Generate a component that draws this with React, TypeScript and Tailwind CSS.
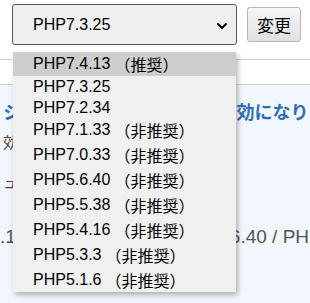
import { ChevronDown } from "lucide-react";

const versions = [
  { label: "PHP7.4.13", note: "（推奨）", h: "h-[24px]" },
  { label: "PHP7.3.25", note: "", h: "h-[21px]" },
  { label: "PHP7.2.34", note: "", h: "h-[21px]" },
  { label: "PHP7.1.33", note: "（非推奨）", h: "h-[24px]" },
  { label: "PHP7.0.33", note: "（非推奨）", h: "h-[25px]" },
  { label: "PHP5.6.40", note: "（非推奨）", h: "h-[25px]" },
  { label: "PHP5.5.38", note: "（非推奨）", h: "h-[25px]" },
  { label: "PHP5.4.16", note: "（非推奨）", h: "h-[25px]" },
  { label: "PHP5.3.3", note: "（非推奨）", h: "h-[25px]" },
  { label: "PHP5.1.6", note: "（非推奨）", h: "h-[25px]" },
];

export default function App() {
  return (
    <div className="relative w-[310px] h-[303px] overflow-hidden bg-white font-['Liberation_Sans','Noto_Sans_CJK_JP',sans-serif] text-black">
      {/* form row */}
      <div className="flex items-center h-[60px] pl-[12px] pb-[10px] border-b border-[#cfcfcf]">
        <div className="flex items-center justify-between w-[225px] h-[41px] pl-[20px] pr-[6px] bg-[#efefef] border border-[#555] rounded-[3px] text-[16px]">
          <span>PHP7.3.25</span>
          <ChevronDown className="w-[16px] h-[16px] mt-[2px]" strokeWidth={3} />
        </div>
        <button className="ml-[10px] w-[54px] h-[35px] rounded-[3px] border border-[#b5b5b5] bg-gradient-to-b from-[#f6f6f6] to-[#e1e1e1] text-[17px] font-['Noto_Sans_CJK_JP',sans-serif] leading-none">
          変更
        </button>
      </div>

      <div className="h-[25px] border-b border-[#cfcfcf]" />

      {/* info panel behind the list */}
      <div className="bg-[#f2f7fd] h-[300px] pl-[3px] pt-[13px]">
        <p className="whitespace-nowrap text-[18px] font-bold text-[#2f6db3] font-['Noto_Sans_CJK_JP',sans-serif] leading-[26px]">
          システムの設定変更は即時有効になります
        </p>
        <p className="mt-[6px] text-[15px] text-[#444] font-['Noto_Sans_CJK_JP',sans-serif] leading-[24px]">
          効果
        </p>
        <p className="mt-[16px] text-[15px] text-[#444] font-['Noto_Sans_CJK_JP',sans-serif] leading-[24px]">
          ュ
        </p>
        <div className="mt-[31px] flex whitespace-nowrap text-[19px] text-[#555] leading-[24px]">
          <span className="shrink-0 w-[214px] -ml-[3px]">.1</span>
          <span className="shrink-0">5.6.40 / PHP7.4</span>
        </div>
      </div>

      {/* open dropdown list */}
      <div className="absolute left-[13px] top-[52px] w-[223px] h-[240px] bg-[#f0f0f0] shadow-[2px_3px_5px_rgba(0,0,0,0.28)]">
        {versions.map((v, i) => (
          <div
            key={v.label}
            className={`flex items-center pl-[20px] text-[16px] whitespace-nowrap ${v.h} ${i === 0 ? "bg-[#cecece]" : ""}`}
          >
            <span>{v.label}</span>
            {v.note && (
              <span className="ml-[4px] font-['Noto_Sans_CJK_JP',sans-serif] text-[16px] leading-none">
                {v.note}
              </span>
            )}
          </div>
        ))}
      </div>
    </div>
  );
}
